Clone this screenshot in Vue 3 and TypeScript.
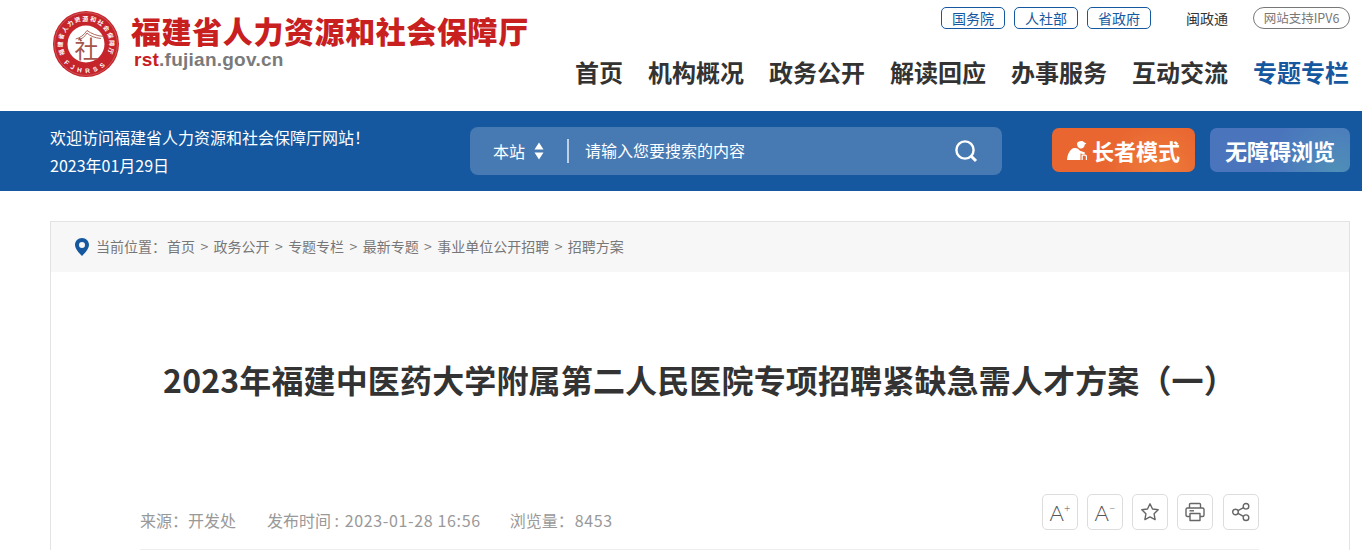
<template>
  <div class="page">
    <header class="top">
      <div class="brand">
        <svg class="emblem" viewBox="0 0 66 66" width="66" height="66">
          <defs>
            <path id="ringTop" d="M12.6 44.75 A23.5 23.5 0 1 1 53.4 44.75" />
            <path id="ringBottom" d="M10.8 51.6 A29 29 0 0 0 55.2 51.6" />
          </defs>
          <circle cx="33" cy="33" r="33" fill="#c4242a" />
          <circle cx="33" cy="33" r="31.4" fill="none" stroke="#fff" stroke-opacity="0.35" stroke-width="0.6" />
          <circle cx="33" cy="33" r="18.5" fill="#fff" />
          <text class="ring-top"><textPath href="#ringTop" startOffset="50%" text-anchor="middle">福建省人力资源和社会保障厅</textPath></text>
          <text class="ring-bottom"><textPath href="#ringBottom" startOffset="50%" text-anchor="middle">FJHRSS</textPath></text>
          <g fill="none" stroke="#a5554a" stroke-width="0.9">
            <path d="M22.7 28 C27 27 31 24 34 19.5 C38 22.5 44 25 51 25.5" />
            <path d="M25 29 C29 28 32 25.5 34 22 C37 25 42 27 48 27.5" />
          </g>
          <text class="seal" x="33.5" y="47">社</text>
        </svg>
        <div class="brand-text">
          <div class="brand-name">福建省人力资源和社会保障厅</div>
          <div class="brand-url"><span>rst</span>.fujian.gov.cn</div>
        </div>
      </div>
      <div class="top-right">
        <div class="links">
          <a v-for="l in govLinks" :key="l" class="pill">{{ l }}</a>
          <a class="plain">闽政通</a>
          <span class="ipv6">网站支持IPV6</span>
        </div>
        <nav class="nav">
          <a v-for="n in navItems" :key="n" :class="{ current: n === '专题专栏' }">{{ n }}</a>
        </nav>
      </div>
    </header>

    <section class="band">
      <div class="welcome">
        <p>欢迎访问福建省人力资源和社会保障厅网站！</p>
        <p>2023年01月29日</p>
      </div>
      <div class="search">
        <span class="scope">本站</span>
        <svg class="updown" width="10" height="18" viewBox="0 0 10 18">
          <path d="M5 0.5 L9.5 7.5 H0.5 Z M5 17.5 L0.5 10.5 H9.5 Z" fill="#fff" />
        </svg>
        <span class="divider"></span>
        <span class="placeholder">请输入您要搜索的内容</span>
        <svg class="loupe" width="24" height="24" viewBox="0 0 24 24" fill="none" stroke="#fff">
          <circle cx="11" cy="11" r="8.6" stroke-width="2.4" />
          <path d="M17.5 17.5 L22 22" stroke-width="3" />
        </svg>
      </div>
      <div class="modes">
        <a class="mode elder">
          <svg width="20" height="20" viewBox="0 0 20 20" fill="#fff">
            <path d="M10 3.5 C10.5 0.8 16 -0.2 17.5 2.6 L19.5 3.6 L17.8 4.6 C17.5 7 16 8.6 14 8.6 C12 8.6 10 6.5 10 3.5 Z" />
            <path d="M0 20 C0.5 14 3 9 7 8 C10 7.5 11.5 9 13 10.8 L18 12.5 L17.4 14.4 L13.5 13.4 V20 Z" />
            <path d="M14.5 14.5 H18 C19.3 14.5 20 15.4 20 16.6 V20 H18.8 V16.6 C18.8 16 18.5 15.7 18 15.7 H15.8 V20 H14.5 Z" />
          </svg>
          长者模式
        </a>
        <a class="mode access">无障碍浏览</a>
      </div>
    </section>

    <main class="card">
      <div class="crumbs">
        <svg width="14" height="18" viewBox="0 0 14 18">
          <path fill-rule="evenodd" d="M7 0 C3 0 0 3 0 6.8 C0 11 4 15 7 18 C10 15 14 11 14 6.8 C14 3 11 0 7 0 Z M7 4 A3 3 0 1 1 7 10 A3 3 0 1 1 7 4 Z" fill="#15589f" />
        </svg>
        <span class="here">当前位置：</span>
        <template v-for="(c, i) in crumbs" :key="c">
          <span v-if="i > 0" class="sep">&gt;</span>
          <a>{{ c }}</a>
        </template>
      </div>
      <article class="article">
        <h1>2023年福建中医药大学附属第二人民医院专项招聘紧缺急需人才方案（一）</h1>
        <div class="meta">
          <div class="facts">
            <span>来源：开发处</span>
            <span class="when">发布时间 : <span class="num">2023-01-28 16:56</span></span>
            <span class="views">浏览量：<span class="num">8453</span></span>
          </div>
          <div class="tools">
            <button class="tool">A<sup>+</sup></button>
            <button class="tool">A<sup>−</sup></button>
            <button class="tool">
              <svg width="20" height="20" viewBox="0 0 20 20" fill="none" stroke="#666" stroke-width="1.4" stroke-linejoin="round">
                <path d="M10 1.8 L12.5 7 L18.2 7.8 L14.1 11.8 L15.1 17.6 L10 14.9 L4.9 17.6 L5.9 11.8 L1.8 7.8 L7.5 7 Z" />
              </svg>
            </button>
            <button class="tool">
              <svg width="20" height="20" viewBox="0 0 20 20" fill="none" stroke="#666" stroke-width="1.4" stroke-linejoin="round">
                <path d="M4.5 6 V2.5 Q4.5 1.5 5.5 1.5 H14.5 Q15.5 1.5 15.5 2.5 V6" />
                <path d="M5 14.5 H2.5 Q1 14.5 1 13 V7.5 Q1 6 2.5 6 H17.5 Q19 6 19 7.5 V13 Q19 14.5 17.5 14.5 H15" />
                <path d="M5 11.5 H15 V18.5 H5 Z" />
                <path d="M4.5 8.8 H9" />
              </svg>
            </button>
            <button class="tool last">
              <svg width="20" height="20" viewBox="0 0 20 20" fill="none" stroke="#666" stroke-width="1.4">
                <circle cx="4.5" cy="10" r="2.8" />
                <circle cx="15" cy="4.3" r="2.8" />
                <circle cx="15" cy="15.7" r="2.8" />
                <path d="M7 8.7 L12.5 5.6 M7 11.3 L12.5 14.4" />
              </svg>
            </button>
          </div>
        </div>
      </article>
    </main>
  </div>
</template>

<script setup lang="ts">
const govLinks = ['国务院', '人社部', '省政府']
const navItems = ['首页', '机构概况', '政务公开', '解读回应', '办事服务', '互动交流', '专题专栏']
const crumbs = ['首页', '政务公开', '专题专栏', '最新专题', '事业单位公开招聘', '招聘方案']
</script>

<style>
html,
body {
  margin: 0;
  height: 554px;
  overflow: hidden;
  background: #fff;
}
</style>

<style scoped>
.page {
  font-family: "Noto Sans CJK SC", "Noto Sans", sans-serif;
  color: #333;
}

.top {
  height: 111px;
  padding: 0 12px 0 53px;
  display: flex;
  justify-content: space-between;
}

.brand {
  display: flex;
  padding-top: 11px;
}

.emblem {
  flex: none;
}

.ring-top {
  font-size: 6px;
  font-weight: 700;
  letter-spacing: 1.3px;
  fill: #fff;
}

.ring-bottom {
  font-family: "Liberation Sans", sans-serif;
  font-size: 6.5px;
  font-weight: 700;
  letter-spacing: 4px;
  fill: #fff;
}

.seal {
  font-size: 24px;
  fill: #a5554a;
  text-anchor: middle;
}

.brand-text {
  margin-left: 12px;
}

.brand-name {
  font-size: 30px;
  line-height: 38px;
  font-weight: 900;
  letter-spacing: 0.6px;
  color: #c8201f;
  white-space: nowrap;
}

.brand-url {
  margin: 1px 0 0 3px;
  font-family: "Liberation Sans", sans-serif;
  font-size: 19px;
  line-height: 20px;
  letter-spacing: 0.25px;
  font-weight: 700;
  color: #7a7a7a;
}

.brand-url span {
  color: #c8201f;
}

.top-right {
  display: flex;
  flex-direction: column;
  align-items: flex-end;
}

.links {
  display: flex;
  align-items: center;
  margin-top: 7px;
  height: 22px;
}

.pill {
  width: 64px;
  height: 22px;
  margin-right: 9px;
  box-sizing: border-box;
  border: 1px solid #15589f;
  border-radius: 5px;
  font-size: 14px;
  line-height: 20px;
  text-align: center;
  color: #15589f;
}

.plain {
  margin-left: 26px;
  font-size: 14px;
  line-height: 20px;
  color: #333;
}

.ipv6 {
  width: 97px;
  height: 22px;
  margin-left: 25px;
  box-sizing: border-box;
  border: 1px solid #777;
  border-radius: 11px;
  font-size: 12.5px;
  line-height: 20px;
  text-align: center;
  color: #777;
}

.nav {
  display: flex;
  gap: 25px;
  margin-top: 19px;
  margin-right: 1px;
  font-size: 24px;
  line-height: 48px;
  font-weight: 700;
}

.nav .current {
  color: #15589f;
}

.band {
  height: 80px;
  padding: 0 12px 0 50px;
  display: flex;
  align-items: center;
  background: #15589f;
  color: #fff;
}

.welcome {
  width: 420px;
  font-size: 16px;
  line-height: 28px;
  margin-top: -1px;
}

.welcome p {
  margin: 0;
}

.search {
  width: 532px;
  height: 48px;
  box-sizing: border-box;
  padding: 0 24px 0 23px;
  display: flex;
  align-items: center;
  border-radius: 8px;
  background: #477ab3;
  font-size: 16px;
}

.updown {
  margin-left: 9px;
}

.divider {
  width: 2px;
  height: 24px;
  margin: 0 16px 0 23px;
  background: rgba(255, 255, 255, 0.65);
}

.placeholder {
  flex: 1;
  margin-top: -2px;
}

.modes {
  margin: -2px 0 0 50px;
  display: flex;
  gap: 15px;
}

.mode {
  height: 44px;
  box-sizing: border-box;
  display: flex;
  align-items: center;
  justify-content: center;
  border-radius: 7px;
  font-size: 22px;
  line-height: 42px;
  font-weight: 700;
  white-space: nowrap;
}

.elder {
  width: 143px;
  gap: 5px;
  background: radial-gradient(circle at 75% 100%, #ee7d3b 0%, #e96631 45%);
}

.access {
  width: 140px;
  background: radial-gradient(circle at 90% 100%, #4f8fb8 0%, #4a75bd 50%);
}

.card {
  margin: 30px 12px 0 50px;
  border: 1px solid #e3e3e3;
  border-bottom: 0;
}

.crumbs {
  height: 50px;
  padding-left: 24px;
  display: flex;
  align-items: center;
  background: #f7f7f7;
  font-size: 14px;
  line-height: 18px;
  color: #777;
}

.crumbs a,
.crumbs span {
  margin-bottom: 2px;
}

.here {
  margin-left: 7px;
  margin-right: 1px;
}

.sep {
  margin: 0 5.4px;
}

.article {
  padding: 0 90px 0 89px;
}

h1 {
  margin: 0;
  padding-top: 84px;
  font-size: 32px;
  line-height: 46px;
  letter-spacing: 0.15px;
  font-weight: 700;
  text-align: center;
  white-space: nowrap;
  color: #333;
}

.meta {
  margin-top: 92px;
  height: 55px;
  display: flex;
  justify-content: space-between;
  border-bottom: 1px solid #eee;
}

.facts {
  display: flex;
  gap: 30px;
  padding-top: 4px;
  font-size: 16px;
  line-height: 44px;
  color: #999;
}

.when {
  margin-left: 1px;
}

.when .num {
  margin-left: 2px;
}

.views {
  margin-left: -1px;
}

.views .num {
  margin-left: 1px;
}

.num {
  letter-spacing: 0.65px;
}

.tools {
  display: flex;
  gap: 9px;
  height: 36px;
}

.tool {
  width: 36px;
  height: 36px;
  padding: 0;
  display: flex;
  align-items: center;
  justify-content: center;
  border: 1px solid #ddd;
  border-radius: 5px;
  background: #fff;
  font-family: Lato, "Liberation Sans", sans-serif;
  font-weight: 300;
  font-size: 22px;
  color: #555;
}

.tool.last {
  margin-left: 1px;
}

.tool sup {
  margin-top: -10px;
  font-size: 11px;
  line-height: 1;
}
</style>
